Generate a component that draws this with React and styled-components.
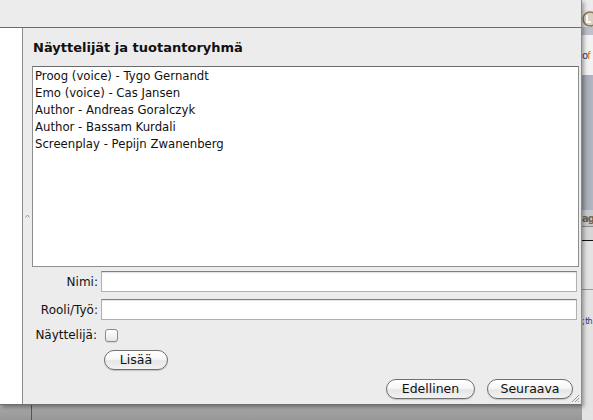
import React from "react";
import styled, { createGlobalStyle } from "styled-components";

const GlobalStyle = createGlobalStyle`
  html, body {
    margin: 0;
    padding: 0;
  }
  body {
    width: 593px;
    height: 420px;
    overflow: hidden;
    background: #e4e4e4;
    font-family: "DejaVu Sans", "Liberation Sans", sans-serif;
    color: #111;
  }
`;

const Screen = styled.div`
  display: flex;
  width: 593px;
  height: 420px;
  overflow: hidden;
`;

const MainColumn = styled.div`
  display: flex;
  flex-direction: column;
  width: 582px;
  flex: none;
  position: relative;
  z-index: 1;
`;

const Sheet = styled.div`
  display: flex;
  flex-direction: column;
  height: 405px;
  background: #ececec;
  border-right: 1px solid #8a8a8a;
  border-bottom: 1px solid #6e6e6e;
  box-sizing: border-box;
  box-shadow: 2px 2px 4px rgba(0, 0, 0, 0.35);
  position: relative;
`;

const TopStrip = styled.div`
  height: 27px;
  flex: none;
  background: #ececec;
  border-bottom: 1px solid #6b6b6b;
`;

const Body = styled.div`
  display: flex;
  flex: 1;
  min-height: 0;
  position: relative;
`;

const SidePanel = styled.div`
  width: 22px;
  flex: none;
  background: #fff;
  border-right: 1px solid #8c8c8c;
`;

const SplitMark = styled.svg`
  position: absolute;
  left: 25px;
  top: 186px;
`;

const Content = styled.div`
  display: flex;
  flex-direction: column;
  flex: 1;
  padding: 0 2px 0 9px;
`;

const Title = styled.div`
  height: 38px;
  line-height: 39px;
  font-size: 13px;
  font-weight: 700;
  padding-left: 1px;
`;

const List = styled.div`
  height: 201px;
  box-sizing: border-box;
  background: #fff;
  border: 1px solid #8e8e8e;
  border-top-color: #6c6c6c;
  padding: 0 2px;
`;

const ListItem = styled.div`
  height: 17px;
  line-height: 18px;
  font-size: 11.7px;
  white-space: nowrap;
`;

const Form = styled.div`
  display: grid;
  grid-template-columns: 66px 1fr;
  grid-template-rows: 21px 21px 16px 20px;
  column-gap: 3px;
  row-gap: 7px;
  margin: 4px 2px 0 0;
`;

const Label = styled.label`
  display: flex;
  align-items: center;
  justify-content: flex-end;
  font-size: 12px;
  white-space: nowrap;
  padding-right: ${(p) => p.$inset || 0}px;
`;

const TextInput = styled.input`
  box-sizing: border-box;
  width: 100%;
  height: 21px;
  margin: 0;
  border: 1px solid #b0b0b0;
  border-top-color: #7f7f7f;
  background: #fff;
  box-shadow: inset 0 1px 1px rgba(0, 0, 0, 0.12);
  outline: none;
  font: inherit;
  font-size: 12px;
`;

const Cell = styled.div`
  display: flex;
  align-items: center;
  padding-left: ${(p) => p.$inset || 0}px;
`;

const Check = styled.span`
  display: block;
  width: 13px;
  height: 13px;
  box-sizing: border-box;
  border: 1px solid #8a8a8a;
  border-radius: 3px;
  background: linear-gradient(#ffffff, #e6e6e6);
  box-shadow: 0 1px 1px rgba(0, 0, 0, 0.1);
`;

const PillButton = styled.button`
  box-sizing: border-box;
  width: ${(p) => p.$w}px;
  height: 20px;
  margin: 0;
  padding: 0;
  border: 1px solid #6f6f6f;
  border-radius: 10px;
  background: linear-gradient(
    #ffffff 0%,
    #f7f7f7 45%,
    #e6e6e6 55%,
    #f2f2f2 100%
  );
  box-shadow: 0 1px 1px rgba(0, 0, 0, 0.18);
  font-family: inherit;
  font-size: 12.5px;
  color: #111;
  line-height: 18px;
`;

const Footer = styled.div`
  display: flex;
  justify-content: flex-end;
  gap: 12px;
  margin: 9px 6px 0 0;
`;

const Grip = styled.svg`
  position: absolute;
  right: 1px;
  bottom: 1px;
`;

const BottomBar = styled.div`
  flex: 1;
  display: flex;
  background: linear-gradient(#a9a9a9, #979797);
`;

const BarCell = styled.div`
  width: ${(p) => p.$w}px;
  border-right: 1px solid #555;
`;

const Backdrop = styled.div`
  display: flex;
  flex-direction: column;
  flex: 1;
  overflow: hidden;
`;

const Band = styled.div`
  height: ${(p) => p.$h}px;
  flex: none;
  background: ${(p) => p.$bg};
  border-bottom: ${(p) => (p.$line ? `1px solid ${p.$line}` : "none")};
  display: flex;
  align-items: center;
  font-size: 10px;
  letter-spacing: -1px;
  white-space: nowrap;
  color: ${(p) => p.$color || "#111"};
  font-weight: ${(p) => (p.$bold ? 700 : 400)};
`;

const Orange = styled.span`
  color: #d0701c;
`;

const LowBand = styled.div`
  flex: 1;
  background: #e3e3e3;
  display: flex;
  flex-direction: column;
`;

const LowText = styled.div`
  margin-top: 27px;
  font-size: 8px;
  letter-spacing: -1px;
  color: #123a8a;
  white-space: nowrap;
`;

const LowLine = styled.div`
  margin-top: 48px;
  height: 1px;
  background: #9a9a9a;
`;

const credits = [
  "Proog (voice) - Tygo Gernandt",
  "Emo (voice) - Cas Jansen",
  "Author - Andreas Goralczyk",
  "Author - Bassam Kurdali",
  "Screenplay - Pepijn Zwanenberg",
];

export default function App() {
  return (
    <Screen>
      <GlobalStyle />
      <MainColumn>
        <Sheet>
          <TopStrip />
          <Body>
            <SidePanel />
            <SplitMark width="5" height="4" viewBox="0 0 5 4">
              <path d="M0.5 3.5 L2.5 1 L4.5 3.5" fill="none" stroke="#9a9a9a" strokeWidth="1" />
            </SplitMark>
            <Content>
              <Title>Näyttelijät ja tuotantoryhmä</Title>
              <List>
                {credits.map((c) => (
                  <ListItem key={c}>{c}</ListItem>
                ))}
              </List>
              <Form>
                <Label htmlFor="nimi">Nimi:</Label>
                <TextInput id="nimi" />
                <Label htmlFor="rooli">Rooli/Työ:</Label>
                <TextInput id="rooli" />
                <Label $inset={1}>Näyttelijä:</Label>
                <Cell $inset={4}>
                  <Check />
                </Cell>
                <span />
                <Cell $inset={3}>
                  <PillButton $w={64}>Lisää</PillButton>
                </Cell>
              </Form>
              <Footer>
                <PillButton $w={89}>Edellinen</PillButton>
                <PillButton $w={86}>Seuraava</PillButton>
              </Footer>
            </Content>
          </Body>
          <Grip width="10" height="10" viewBox="0 0 10 10">
            <path d="M9 2 L2 9 M9 5 L5 9 M9 8 L8 9" stroke="#9a9a9a" strokeWidth="1" />
          </Grip>
        </Sheet>
        <BottomBar>
          <BarCell $w={31} />
        </BottomBar>
      </MainColumn>
      <Backdrop>
        <Band $h={10} $bg="#ececec" />
        <Band $h={17} $bg="#e6e6e6">
          <svg width="11" height="16" viewBox="0 0 11 16">
            <circle cx="8" cy="8" r="7" fill="#d9d2c2" stroke="#8a7a5a" strokeWidth="1.5" />
            <path d="M5 4 V11 H9" fill="none" stroke="#fff" strokeWidth="2" />
          </svg>
        </Band>
        <Band $h={8} $bg="#bcc1ca" />
        <Band $h={40} $bg="#f2f2f2" $color="#123a8a">
          o<Orange>f</Orange>
        </Band>
        <Band $h={135} $bg="linear-gradient(90deg, #9fa5b0, #b2b7c1)" />
        <Band $h={16} $bg="#c8cad0" $color="#6d6252" $bold $line="#8a8a8a">
          ag
        </Band>
        <Band $h={13} $bg="#d6d6d6" $line="#111" />
        <LowBand>
          <LowLine />
          <LowText>; th</LowText>
        </LowBand>
      </Backdrop>
    </Screen>
  );
}
